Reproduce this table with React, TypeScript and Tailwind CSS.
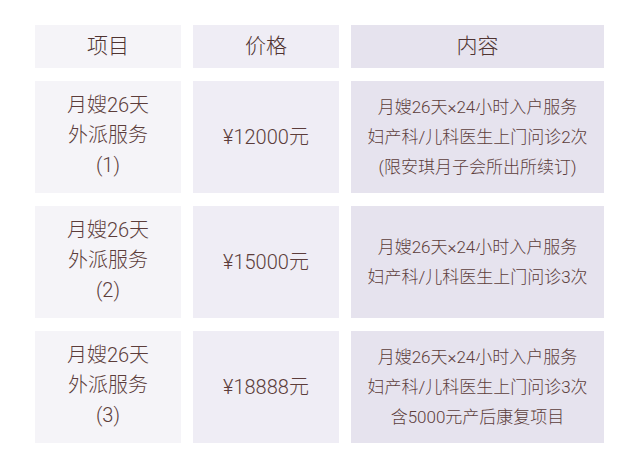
const rows = [
  {
    name: ["月嫂26天", "外派服务", "(1)"],
    price: "¥12000元",
    content: ["月嫂26天×24小时入户服务", "妇产科/儿科医生上门问诊2次", "(限安琪月子会所出所续订)"],
  },
  {
    name: ["月嫂26天", "外派服务", "(2)"],
    price: "¥15000元",
    content: ["月嫂26天×24小时入户服务", "妇产科/儿科医生上门问诊3次"],
  },
  {
    name: ["月嫂26天", "外派服务", "(3)"],
    price: "¥18888元",
    content: ["月嫂26天×24小时入户服务", "妇产科/儿科医生上门问诊3次", "含5000元产后康复项目"],
  },
];

export default function App() {
  return (
    <div className="h-[470px] w-[640px] bg-white pl-[35px] pt-[25px] font-['Roboto','Noto_Sans_CJK_SC',sans-serif] text-[#5c3d3b]">
      <div className="grid grid-cols-[146px_146px_253px] gap-x-[12px] gap-y-[13px]">
        <div className="flex h-[43px] items-center justify-center bg-[#f5f4f8] text-[21px] font-light text-[#4f3331]">项目</div>
        <div className="flex h-[43px] items-center justify-center bg-[#efedf5] text-[21px] font-light text-[#4f3331]">价格</div>
        <div className="flex h-[43px] items-center justify-center bg-[#e6e3ee] text-[21px] font-light text-[#4f3331]">内容</div>
        {rows.map((row) => (
          <Row key={row.price} {...row} />
        ))}
      </div>
    </div>
  );
}

function Row({ name, price, content }: { name: string[]; price: string; content: string[] }) {
  return (
    <>
      <div className="flex h-[112px] flex-col items-center justify-center bg-[#f5f4f8] pb-[4px] text-[20px] font-light leading-[30px]">
        {name.map((line) => (
          <span key={line}>{line}</span>
        ))}
      </div>
      <div className="flex h-[112px] items-center justify-center bg-[#efedf5] text-[20px] font-light">
        {price}
      </div>
      <div className="flex h-[112px] flex-col items-center justify-center bg-[#e6e3ee] text-[17px] font-light leading-[30px]">
        {content.map((line) => (
          <span key={line}>{line}</span>
        ))}
      </div>
    </>
  );
}
